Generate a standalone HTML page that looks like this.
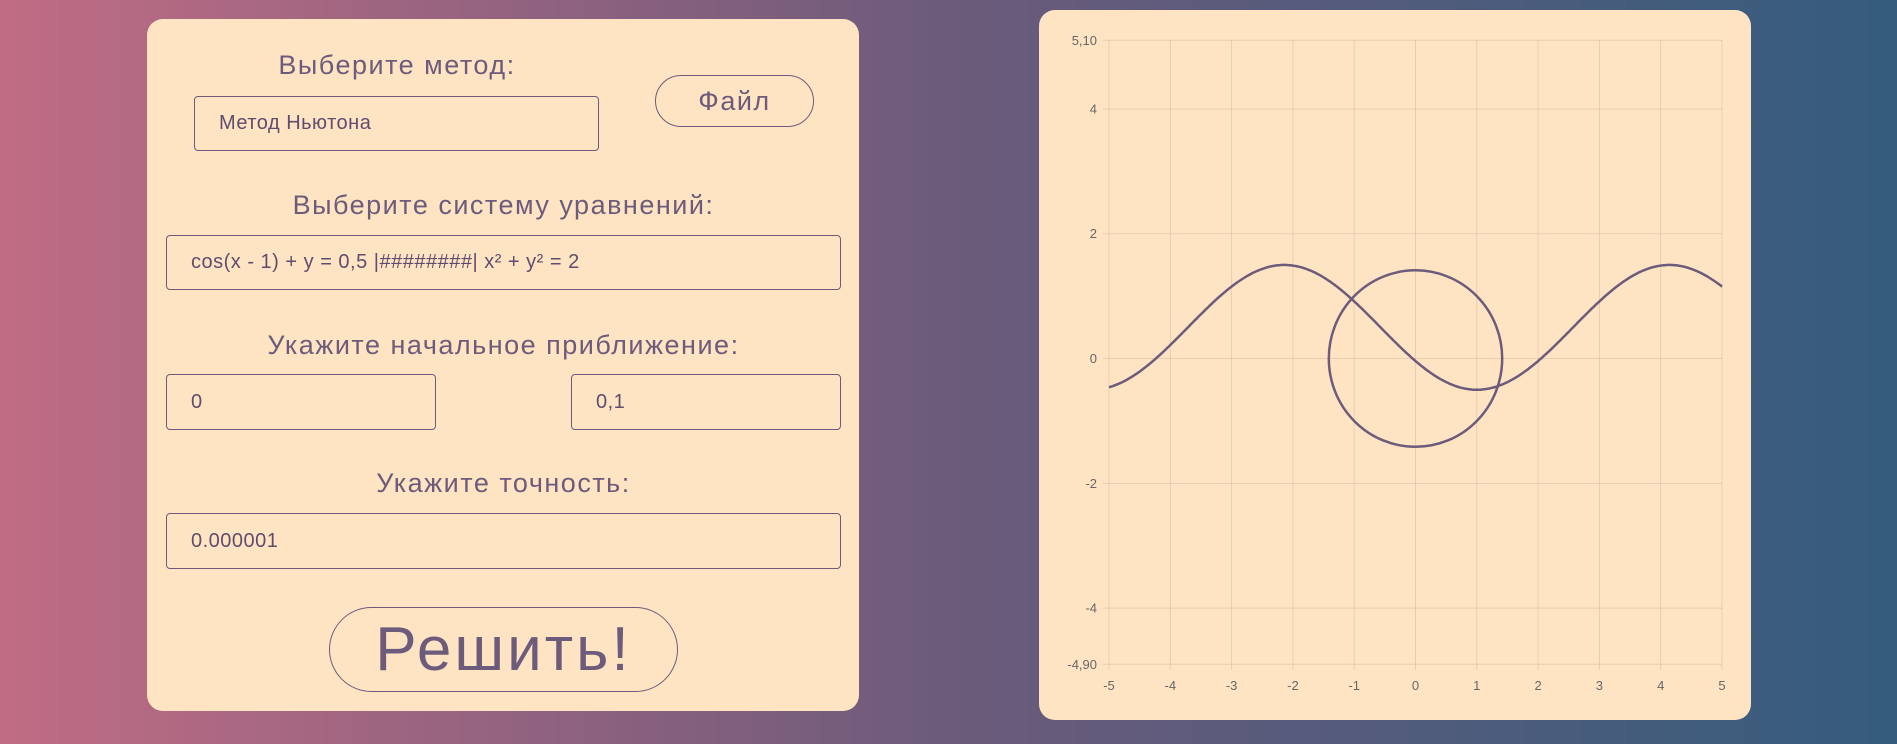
<!DOCTYPE html>
<html><head><meta charset="utf-8"><style>
*{box-sizing:border-box;margin:0;padding:0}
body{width:1897px;height:744px;overflow:hidden;background:linear-gradient(90deg,#c06c84 0%,#6c5b7b 50%,#355c7d 100%);font-family:"Liberation Sans",sans-serif;color:#6c5b7b;position:relative}
.p{position:absolute;background:#ffe4c4;border-radius:16px}
.t{position:absolute;font-size:27px;text-align:center;white-space:nowrap;letter-spacing:1.5px}
.in{position:absolute;border:1px solid #6c5b7b;border-radius:4px;font-size:20px;padding-left:24px;display:flex;align-items:center;white-space:nowrap;letter-spacing:0.5px;color:#5e4d6e}
.b{position:absolute;border:1px solid #6c5b7b;border-radius:60px;display:flex;align-items:center;justify-content:center;letter-spacing:1.5px}
svg{position:absolute;left:0;top:0}
</style></head><body>
<div class="p" style="left:147px;top:19px;width:712px;height:692px"></div>
<div class="t" style="left:258px;top:50px;width:278px">Выберите метод:</div>
<div class="in" style="left:194px;top:96px;width:405px;height:55px">Метод Ньютона</div>
<div class="b" style="left:655px;top:75px;width:159px;height:52px;font-size:27px">Файл</div>
<div class="t" style="left:166px;top:190px;width:675px">Выберите систему уравнений:</div>
<div class="in" style="left:166px;top:235px;width:675px;height:55px">cos(x - 1) + y = 0,5 |########| x² + y² = 2</div>
<div class="t" style="left:166px;top:330px;width:675px">Укажите начальное приближение:</div>
<div class="in" style="left:166px;top:374px;width:270px;height:56px">0</div>
<div class="in" style="left:571px;top:374px;width:270px;height:56px">0,1</div>
<div class="t" style="left:166px;top:468px;width:675px">Укажите точность:</div>
<div class="in" style="left:166px;top:513px;width:675px;height:56px">0.000001</div>
<div class="b" style="left:329px;top:607px;width:349px;height:85px;font-size:62px;letter-spacing:3px">Решить!</div>
<div class="p" style="left:1039px;top:10px;width:712px;height:710px"></div>
<svg width="1897" height="744" id="s" font-family="Liberation Sans, sans-serif" font-size="13" fill="#666"></svg>
<script>
var s=document.getElementById('s'),h='';
function X(x){return 1109+(x+5)*61.3}function Y(y){return 40.3+(5.1-y)*62.4}
var g='rgba(170,120,110,0.22)';
for(var i=-5;i<=5;i++){h+='<line x1="'+X(i)+'" y1="40" x2="'+X(i)+'" y2="670" stroke="'+g+'"/>';h+='<text x="'+X(i)+'" y="690" text-anchor="middle">'+i+'</text>';}
var ys=[[5.1,'5,10'],[4,'4'],[2,'2'],[0,'0'],[-2,'-2'],[-4,'-4'],[-4.9,'-4,90']];
ys.forEach(function(a){h+='<line x1="1103" y1="'+Y(a[0])+'" x2="1722" y2="'+Y(a[0])+'" stroke="'+g+'"/>';h+='<text x="1097" y="'+(Y(a[0])+4.5)+'" text-anchor="end">'+a[1]+'</text>';});
var d='';for(var k=0;k<=400;k++){var x=-5+k*10/400,y=0.5-Math.cos(x-1);d+=(k?'L':'M')+X(x).toFixed(1)+' '+Y(y).toFixed(1);}
h+='<path d="'+d+'" fill="none" stroke="#6c5b7b" stroke-width="2.5"/>';
h+='<ellipse cx="'+X(0)+'" cy="'+Y(0)+'" rx="'+(1.4142*61.3)+'" ry="'+(1.4142*62.4)+'" fill="none" stroke="#6c5b7b" stroke-width="2.5"/>';
s.innerHTML=h;
</script>
</body></html>
